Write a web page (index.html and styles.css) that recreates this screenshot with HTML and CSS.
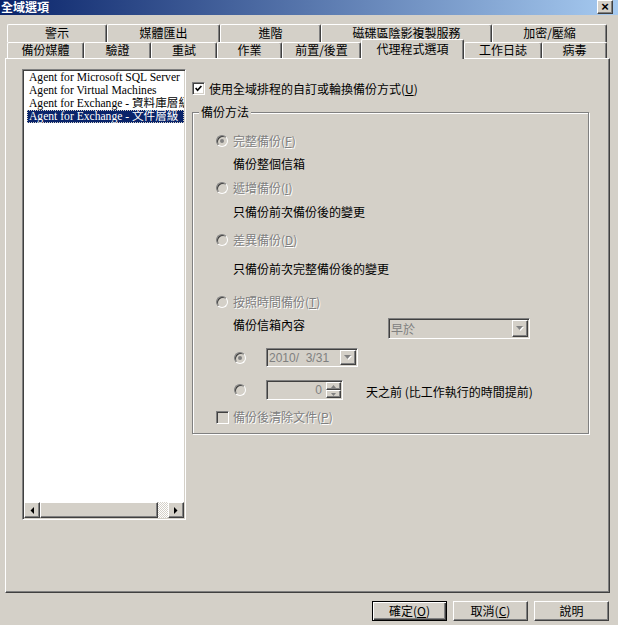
FILE: index.html
```html
<!DOCTYPE html>
<html lang="zh-Hant">

<head>
    <meta charset="UTF-8">
    <meta name="viewport" content="width=device-width, initial-scale=1.0">
    <title>全域選項</title>
    <link rel="stylesheet" href="styles.css">
</head>

<body>
    <div class="titlebar">
        <span class="title">全域選項</span>
        <span class="close-button">×</span>
    </div>

    <!-- Tabs -->
    <div class="tabs">
        <div class="tab-row back">
            <div class="tab t-alert">警示</div>
            <div class="tab t-export">媒體匯出</div>
            <div class="tab t-advanced">進階</div>
            <div class="tab t-vss">磁碟區陰影複製服務</div>
            <div class="tab t-encrypt">加密/壓縮</div>
        </div>
        <div class="tab-row front">
            <div class="tab t-media">備份媒體</div>
            <div class="tab t-verify">驗證</div>
            <div class="tab t-retry">重試</div>
            <div class="tab t-job">作業</div>
            <div class="tab t-prepost">前置/後置</div>
            <div class="tab t-agent active">代理程式選項</div>
            <div class="tab t-log">工作日誌</div>
            <div class="tab t-virus">病毒</div>
        </div>
    </div>

    <div class="panel">
        <div class="agent-list">
            <div class="list-items">
                <div class="list-item">Agent for Microsoft SQL Server</div>
                <div class="list-item">Agent for Virtual Machines</div>
                <div class="list-item">Agent for Exchange - 資料庫層級</div>
                <div class="list-item selected">Agent for Exchange - 文件層級</div>
            </div>
            <div class="hscroll">
                <span class="scroll-btn">
                    <svg width="4" height="7" viewBox="0 0 4 7"><polygon points="4,0 4,7 0.5,3.5" fill="#000" /></svg>
                </span>
                <span class="scroll-thumb"></span>
                <span class="scroll-track"></span>
                <span class="scroll-btn">
                    <svg width="4" height="7" viewBox="0 0 4 7"><polygon points="0,0 0,7 3.5,3.5" fill="#000" /></svg>
                </span>
            </div>
        </div>

        <div class="options">
            <div class="check-row">
                <span class="checkbox">
                    <svg width="7" height="7" viewBox="0 0 7 7"><polyline points="0.6,3 2.6,5.2 6.4,1" fill="none" stroke="#000" stroke-width="1.7" /></svg>
                </span>
                <span>使用全域排程的自訂或輪換備份方式(<u>U</u>)</span>
            </div>

            <div class="group">
                <span class="legend">備份方法</span>

                <div class="row r-full">
                    <span class="radio checked"></span>
                    <span class="disabled">完整備份(<u>F</u>)</span>
                </div>
                <div class="row note r-full-note">備份整個信箱</div>

                <div class="row r-incr">
                    <span class="radio"></span>
                    <span class="disabled">遞增備份(<u>I</u>)</span>
                </div>
                <div class="row note r-incr-note">只備份前次備份後的變更</div>

                <div class="row r-diff">
                    <span class="radio"></span>
                    <span class="disabled">差異備份(<u>D</u>)</span>
                </div>
                <div class="row note r-diff-note">只備份前次完整備份後的變更</div>

                <div class="row r-time">
                    <span class="radio"></span>
                    <span class="disabled">按照時間備份(<u>T</u>)</span>
                </div>

                <div class="row note r-content">
                    <span class="content-label">備份信箱內容</span>
                    <span class="combo">
                        <span class="field-text">早於</span>
                        <span class="drop-btn">
                            <svg width="8" height="5" viewBox="0 0 8 5"><polygon points="1,1 8,1 4.5,5" fill="#fff" /><polygon points="0,0 7,0 3.5,4" fill="#808080" /></svg>
                        </span>
                    </span>
                </div>

                <div class="row r-date">
                    <span class="radio checked"></span>
                    <span class="datepicker">
                        <span class="field-text">2010/&nbsp; 3/31</span>
                        <span class="drop-btn">
                            <svg width="8" height="5" viewBox="0 0 8 5"><polygon points="1,1 8,1 4.5,5" fill="#fff" /><polygon points="0,0 7,0 3.5,4" fill="#808080" /></svg>
                        </span>
                    </span>
                </div>

                <div class="row r-days">
                    <span class="radio"></span>
                    <span class="spinner">
                        <span class="spin-text">0</span>
                        <span class="spin-btns">
                            <span class="spin-btn"><svg width="5" height="3" viewBox="0 0 5 3"><polygon points="2.5,0 5,3 0,3" fill="#808080" /></svg></span>
                            <span class="spin-btn"><svg width="5" height="3" viewBox="0 0 5 3"><polygon points="0,0 5,0 2.5,3" fill="#808080" /></svg></span>
                        </span>
                    </span>
                    <span class="days-label">天之前 (比工作執行的時間提前)</span>
                </div>

                <div class="row r-purge">
                    <span class="checkbox off"></span>
                    <span class="disabled">備份後清除文件(<u>P</u>)</span>
                </div>
            </div>
        </div>
    </div>

    <div class="buttons">
        <button class="btn default">確定(<u>O</u>)</button>
        <button class="btn">取消(<u>C</u>)</button>
        <button class="btn">說明</button>
    </div>
</body>

</html>
```

FILE: styles.css
```css
body {
    margin: 0;
    width: 618px;
    height: 625px;
    overflow: hidden;
    background-color: #d4d0c8;
    font-family: "Noto Sans CJK TC", sans-serif;
    font-size: 12px;
    color: #000;
}

u {
    text-decoration: underline;
}

/* title bar */
.titlebar {
    height: 15px;
    display: flex;
    justify-content: space-between;
    align-items: flex-start;
    background: linear-gradient(to right, #0a246a, #a6caf0);
}

.title {
    color: white;
    font-weight: bold;
    font-size: 12px;
    line-height: 14px;
    padding-left: 1px;
}

.close-button {
    box-sizing: border-box;
    width: 16px;
    height: 14px;
    margin-right: 5px;
    border: 1px solid;
    border-color: #fff #404040 #404040 #fff;
    box-shadow: inset -1px -1px #808080;
    background: #d4d0c8;
    font-family: "Liberation Sans", sans-serif;
    font-weight: bold;
    font-size: 13px;
    line-height: 11px;
    text-align: center;
}

/* tabs */
.tabs {
    margin: 9px 0 0 7px;
    width: 600px;
}

.tab-row {
    display: flex;
    align-items: flex-start;
}

.tab-row.front {
    height: 16px;
}

.tab {
    box-sizing: border-box;
    height: 18px;
    border-top: 1px solid #fff;
    border-left: 1px solid #fff;
    border-right: 1px solid #404040;
    border-radius: 2px 2px 0 0;
    box-shadow: inset -1px 0 #808080;
    text-align: center;
    line-height: 16px;
    white-space: nowrap;
}

.front .tab {
    height: 16px;
    line-height: 14px;
}

.front .tab.active {
    position: relative;
    z-index: 1;
    height: 20px;
    margin-top: -3px;
    line-height: 18px;
    background: #d4d0c8;
}

.t-alert { width: 100px; }
.t-export { width: 113px; }
.t-advanced { width: 101px; }
.t-vss { width: 171px; }
.t-encrypt { width: 115px; }

.t-media { width: 77px; }
.t-verify { width: 67px; }
.t-retry { width: 66px; }
.t-job { width: 65px; }
.t-prepost { width: 79px; }
.t-agent { width: 103px; }
.t-log { width: 78px; }
.t-virus { width: 65px; }

/* tab page */
.panel {
    box-sizing: border-box;
    width: 605px;
    height: 535px;
    margin-left: 5px;
    padding: 10px 0 0 16px;
    display: flex;
    align-items: flex-start;
    border: 1px solid;
    border-color: #fff #404040 #404040 #fff;
    box-shadow: inset -1px -1px #808080;
}

.agent-list {
    box-sizing: border-box;
    width: 164px;
    height: 451px;
    display: flex;
    flex-direction: column;
    background: white;
    border: 1px solid;
    border-color: #808080 #fff #fff #808080;
    box-shadow: inset 1px 1px #404040, inset -1px -1px #d4d0c8;
    padding: 1px;
}

.list-items {
    flex: 1;
    overflow: hidden;
    font-family: "Liberation Serif", "Noto Sans CJK TC", serif;
    font-size: 11.6px;
}

.list-item {
    height: 13px;
    line-height: 13px;
    margin-left: 3px;
    padding-left: 2px;
    white-space: nowrap;
}

.list-item.selected {
    background: #0a246a;
    color: white;
    outline: 1px dotted #d4d0c8;
    outline-offset: -1px;
}

.hscroll {
    display: flex;
    height: 16px;
}

.scroll-btn,
.scroll-thumb,
.drop-btn,
.spin-btn,
.btn {
    box-sizing: border-box;
    border: 1px solid;
    border-color: #fff #404040 #404040 #fff;
    box-shadow: inset -1px -1px #808080;
    background: #d4d0c8;
}

.scroll-btn {
    width: 16px;
    height: 16px;
    display: flex;
    justify-content: center;
    align-items: center;
}

.scroll-thumb {
    width: 118px;
}

.scroll-track {
    flex: 1;
    background: repeating-conic-gradient(#fff 0 25%, #d4d0c8 0 50%) 0 0 / 2px 2px;
}

/* options column */
.options {
    margin-left: 6px;
    display: flex;
    flex-direction: column;
    align-items: flex-start;
}

.check-row {
    display: flex;
    align-items: center;
    gap: 4px;
    margin-top: 13px;
    height: 13px;
    line-height: 13px;
}

.checkbox {
    box-sizing: border-box;
    width: 13px;
    height: 13px;
    display: flex;
    justify-content: center;
    align-items: center;
    background: white;
    border: 1px solid;
    border-color: #808080 #fff #fff #808080;
    box-shadow: inset 1px 1px #404040, inset -1px -1px #d4d0c8;
}

.checkbox.off {
    background: #d4d0c8;
}

.group {
    box-sizing: border-box;
    width: 397px;
    margin-top: 17px;
    padding: 0 0 9px 23px;
    display: flex;
    flex-direction: column;
    align-items: flex-start;
    border: 1px solid #808080;
    box-shadow: inset 1px 1px #fff, 1px 1px #fff;
}

.legend {
    margin: -8px 0 0 -17px;
    padding: 0 2px;
    line-height: 14px;
    background: #d4d0c8;
}

.row {
    display: flex;
    align-items: center;
    height: 14px;
    line-height: 14px;
    white-space: nowrap;
}

.radio + .disabled {
    margin-left: 5px;
}

.note {
    padding-left: 17px;
}

.r-full { margin-top: 15px; }
.r-full-note { margin-top: 9px; }
.r-incr { margin-top: 10px; }
.r-incr-note { margin-top: 10px; }
.r-diff { margin-top: 14px; }
.r-diff-note { margin-top: 15px; }
.r-time { margin-top: 19px; }

.r-content {
    margin-top: 9px;
    height: 21px;
    align-items: flex-start;
}

.r-date {
    margin-top: 9px;
    height: 19px;
    padding-left: 18px;
}

.r-days {
    margin-top: 13px;
    height: 20px;
    padding-left: 18px;
}

.r-purge {
    margin-top: 10px;
    gap: 4px;
}

.disabled {
    color: #808080;
    text-shadow: 1px 1px #fff;
}

.radio {
    box-sizing: border-box;
    width: 12px;
    height: 12px;
    flex: none;
    display: flex;
    justify-content: center;
    align-items: center;
    border-radius: 50%;
    border: 1px solid;
    border-color: #808080 #fff #fff #808080;
    box-shadow: inset 1px 1px #404040, inset -1px -1px #d4d0c8;
    background: #d4d0c8;
}

.radio.checked::after {
    content: "";
    width: 4px;
    height: 4px;
    border-radius: 50%;
    background: #808080;
}

.content-label {
    width: 155px;
}

.combo,
.datepicker,
.spinner {
    box-sizing: border-box;
    display: flex;
    align-items: center;
    border: 1px solid;
    border-color: #808080 #fff #fff #808080;
    box-shadow: inset 1px 1px #404040, inset -1px -1px #d4d0c8;
    padding: 1px;
    background: #d4d0c8;
    color: #808080;
}

.combo {
    width: 142px;
    height: 21px;
}

.datepicker {
    width: 92px;
    height: 19px;
    margin-left: 20px;
    font-family: "Liberation Sans", sans-serif;
}

.field-text {
    flex: 1;
    padding-left: 1px;
}

.drop-btn {
    width: 16px;
    height: 100%;
    display: flex;
    justify-content: center;
    align-items: center;
}

.spinner {
    width: 77px;
    height: 20px;
    margin-left: 20px;
    font-family: "Liberation Sans", sans-serif;
}

.spin-text {
    flex: 1;
    text-align: right;
    padding-right: 4px;
}

.spin-btns {
    width: 15px;
    height: 100%;
    display: flex;
    flex-direction: column;
}

.spin-btn {
    flex: 1;
    display: flex;
    justify-content: center;
    align-items: center;
}

.days-label {
    margin-left: 23px;
    padding-top: 3px;
}

/* dialog buttons */
.buttons {
    display: flex;
    justify-content: flex-end;
    gap: 6px;
    margin-top: 8px;
    padding-right: 9px;
}

.btn {
    width: 75px;
    height: 20px;
    padding: 0;
    font-family: "Noto Sans CJK TC", sans-serif;
    font-size: 12px;
    line-height: 16px;
    color: #000;
}

.btn.default {
    border-color: #000;
    box-shadow: inset 1px 1px #fff, inset -1px -1px #404040, inset -2px -2px #808080;
}
```
